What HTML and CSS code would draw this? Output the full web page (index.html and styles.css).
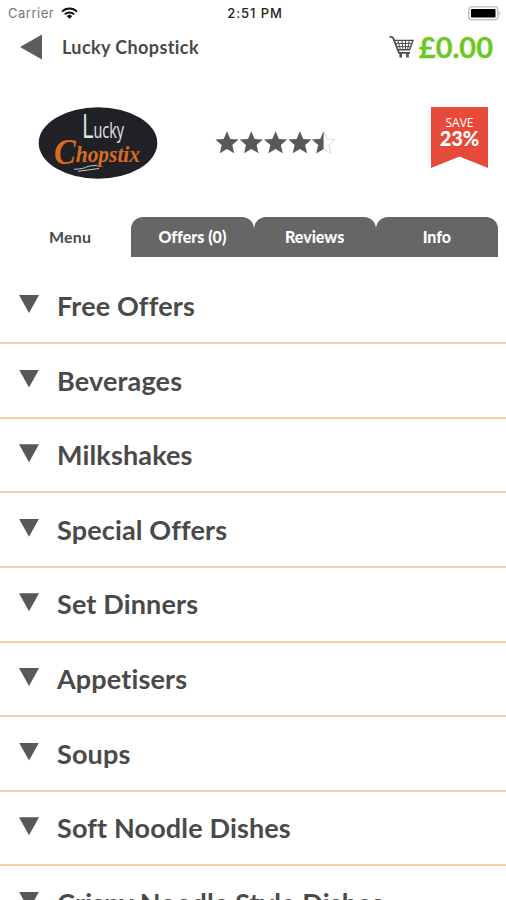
FILE: index.html
```html
<!DOCTYPE html>
<html lang="en">
<head>
    <meta charset="UTF-8">
    <meta name="viewport" content="width=device-width, initial-scale=1.0">
    <title>Lucky Chopstick</title>
    <link rel="stylesheet" href="styles.css">
</head>
<body>
    <div class="status-bar">
        <div class="carrier">
            <span>Carrier</span>
            <svg class="wifi" viewBox="0 0 17 12" width="17" height="12">
                <path d="M1 4.6 A10.6 10.6 0 0 1 16 4.6" fill="none" stroke="#111" stroke-width="2"/>
                <path d="M3.8 7.4 A6.7 6.7 0 0 1 13.2 7.4" fill="none" stroke="#111" stroke-width="1.9"/>
                <path d="M8.5 11.8 L5.8 9.2 A3.8 3.8 0 0 1 11.2 9.2 Z" fill="#111"/>
            </svg>
        </div>
        <span class="time">2:51 PM</span>
        <svg class="battery" viewBox="0 0 34 15" width="34" height="15">
            <rect x="0.8" y="0.8" width="29" height="13" rx="3" fill="#fff" stroke="#c4c4c4" stroke-width="1.5"/>
            <rect x="3" y="3" width="24.5" height="8.6" rx="0.8" fill="#000"/>
            <path d="M31.3 5 Q33.4 7.3 31.3 9.6 Z" fill="#bbb"/>
        </svg>
    </div>

    <header class="header">
        <svg class="back" viewBox="0 0 24 26" width="24" height="26">
            <path d="M0 13 L22 0.5 V25.5 Z" fill="#5c5c5c"/>
        </svg>
        <h1>Lucky Chopstick</h1>
        <div class="basket">
            <svg viewBox="0 0 26 24" width="26" height="24" fill="none" stroke="#4d4d4d">
                <path d="M0.5 1.5 L4 2.7 L10 17.8 H21" stroke-width="1.8"/>
                <path d="M5 5.4 H24 L20.5 14.7 H8.7" stroke-width="1.4"/>
                <path d="M6 8.5 H22.8 M7.2 11.6 H21.6 M9 5.5 L11.3 14.5 M12.8 5.5 L14 14.5 M16.5 5.5 V14.5 M20.3 5.5 L18.6 14.5" stroke-width="1"/>
                <path d="M11.7 18 V22.5 M18.5 18 V22.5" stroke-width="2.6"/>
            </svg>
            <span class="total">£0.00</span>
        </div>
    </header>

    <section class="restaurant">
        <svg class="logo" viewBox="0 0 120 72" width="120" height="72">
            <ellipse cx="60" cy="36" rx="59.3" ry="35.7" fill="#202127"/>
            <text class="logo-top" x="44" y="31" textLength="42" lengthAdjust="spacingAndGlyphs"><tspan font-size="32">L</tspan><tspan font-size="21">ucky</tspan></text>
            <text class="logo-bottom" x="16" y="57" textLength="86" lengthAdjust="spacingAndGlyphs"><tspan font-size="35">C</tspan><tspan font-size="23" dy="-2">hopstix</tspan></text>
            <path d="M36 62.3 Q46 62 50 59.3 L59 58.2 M40 64.3 L61 61.5" fill="none" stroke="#ddd" stroke-width="0.9"/>
        </svg>

        <svg class="stars" viewBox="0 0 120 24" width="120" height="24">
            <defs>
                <path id="star" d="M12 0.3 L15.3 7.9 L23.6 8.6 L17.3 14 L19.2 22.3 L12 17.9 L4.8 22.3 L6.7 14 L0.4 8.6 L8.7 7.9 Z"/>
            </defs>
            <g fill="#595959">
                <use href="#star"/>
                <use href="#star" x="24.3"/>
                <use href="#star" x="48.6"/>
                <use href="#star" x="72.9"/>
            </g>
            <use href="#star" x="96.6" fill="#fff" stroke="#d2d2d2" stroke-width="0.9"/>
            <path d="M108.6 0.3 V17.9 L101.4 22.3 L103.3 14 L97 8.6 L105.3 7.9 Z" fill="#595959"/>
        </svg>

        <div class="ribbon">
            <span class="ribbon-label">SAVE</span>
            <span class="ribbon-value">23%</span>
        </div>
    </section>

    <nav class="tabs">
        <a class="tab active">Menu</a>
        <a class="tab">Offers (0)</a>
        <a class="tab">Reviews</a>
        <a class="tab">Info</a>
    </nav>

    <ul class="categories">
        <li><span class="arrow"></span>Free Offers</li>
        <li><span class="arrow"></span>Beverages</li>
        <li><span class="arrow"></span>Milkshakes</li>
        <li><span class="arrow"></span>Special Offers</li>
        <li><span class="arrow"></span>Set Dinners</li>
        <li><span class="arrow"></span>Appetisers</li>
        <li><span class="arrow"></span>Soups</li>
        <li><span class="arrow"></span>Soft Noodle Dishes</li>
        <li><span class="arrow"></span>Crispy Noodle Style Dishes</li>
    </ul>
</body>
</html>
```
FILE: styles.css
```css
* {
    box-sizing: border-box;
}

body {
    margin: 0;
    height: 900px;
    overflow: hidden;
    background: #fff;
    color: #4a4a4a;
    font-family: Lato, sans-serif;
    font-variant-ligatures: none;
}

.status-bar {
    display: grid;
    grid-template-columns: 1fr auto 1fr;
    align-items: center;
    height: 26px;
    padding: 0 4px 0 8px;
    font-family: Inter, sans-serif;
    font-size: 13px;
}

.carrier {
    display: flex;
    align-items: center;
    gap: 7px;
    color: #777;
    letter-spacing: 0.5px;
}

.time {
    color: #222;
    font-weight: 500;
    letter-spacing: 0.9px;
}

.battery {
    justify-self: end;
}

.header {
    display: flex;
    align-items: center;
    height: 42px;
    padding: 0 13px 0 20px;
}

.header h1 {
    margin: 0 auto 0 18px;
    font-size: 18px;
    font-weight: 700;
    letter-spacing: 0.4px;
}

.basket {
    display: flex;
    align-items: center;
    gap: 4px;
}

.total {
    margin-top: -1px;
    color: #6cc81e;
    font-size: 29px;
    font-weight: 700;
    -webkit-text-stroke: 0.3px #6cc81e;
}

.restaurant {
    display: flex;
    align-items: flex-start;
    justify-content: space-between;
    height: 149px;
    padding: 39px 18px 0 38px;
}

.logo-top {
    fill: #e6e6e6;
    font-family: "Open Sans", sans-serif;
}

.logo-bottom {
    fill: #dc6b1e;
    font-family: "Liberation Serif", serif;
    font-style: italic;
    font-weight: 700;
}

.stars {
    margin: 24px 39px 0 0;
}

.ribbon {
    display: flex;
    flex-direction: column;
    align-items: center;
    width: 57px;
    height: 61px;
    padding-top: 9px;
    background: #e64a3b;
    clip-path: polygon(0 0, 100% 0, 100% 100%, 50% 81%, 0 100%);
    color: #fff;
}

.ribbon-label {
    font-family: "Open Sans", sans-serif;
    font-size: 12px;
    line-height: 14px;
}

.ribbon-value {
    font-size: 20px;
    font-weight: 900;
    line-height: 17px;
}

.tabs {
    display: grid;
    grid-template-columns: repeat(4, 1fr);
    height: 40px;
    padding: 0 8px 0 9px;
}

.tab {
    display: flex;
    align-items: center;
    justify-content: center;
    padding-bottom: 2px;
    border-radius: 12px 12px 0 0;
    background: #666;
    color: #fff;
    font-size: 16px;
    font-weight: 900;
}

.tab.active {
    background: none;
    color: #4a4a4a;
    font-weight: 700;
    letter-spacing: 0.2px;
}

.categories {
    margin: 12.7px 0 0;
    padding: 0;
    list-style: none;
}

.categories li {
    display: flex;
    align-items: center;
    gap: 18px;
    height: 74.6px;
    padding: 0 0 1px 19px;
    border-bottom: 2px solid #fad0ab;
    font-size: 27px;
    font-weight: 700;
    letter-spacing: 0.15px;
    white-space: nowrap;
}

.arrow {
    width: 20px;
    height: 18px;
    margin-bottom: 3px;
    background: #585858;
    clip-path: polygon(0 0, 100% 0, 50% 100%);
}
```
